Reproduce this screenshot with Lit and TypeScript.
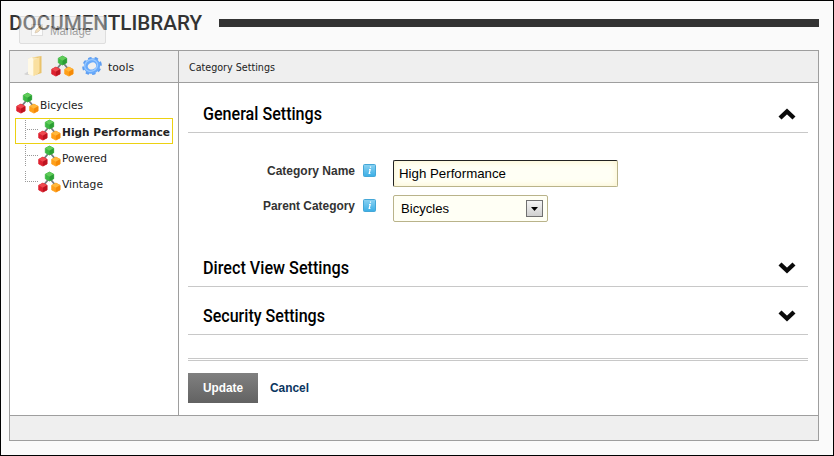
import { LitElement, html, css, svg } from "lit";
import { customElement, property } from "lit/decorators.js";

/** One line of text fitted to a set width; the baseline sits 4px above the box's foot. */
const line = (text: string, width: number, kind: string, height = 18) => html`
  <svg class="line ${kind}" width=${width} height=${height}>
    <text x="0" y=${height - 4} textLength=${width} lengthAdjust="spacingAndGlyphs">${text}</text>
  </svg>`;

const cube = (x: number, y: number, top: string, left: string, right: string) => svg`
  <g transform="translate(${x} ${y})">
    <path d="M0-4.5 4.2-2.3V2.3L0 4.5-4.2 2.3V-2.3Z" fill=${left} stroke=${left} stroke-width=".8" stroke-linejoin="round" />
    <path d="M0-4.5 4.2-2.3 0 .2-4.2-2.3Z" fill=${top} />
    <path d="M4.2-2.3 0 .2V4.5L4.2 2.3Z" fill=${right} />
  </g>`;

@customElement("category-icon")
class CategoryIcon extends LitElement {
  static styles = css`
    :host { display: block; width: 23px; height: 22px; flex: none; }
    svg { display: block; }
  `;
  render() {
    return html`<svg width="23" height="22" viewBox="0 0 23 22">
      <path d="M11.5 7 5 15M11.5 7l6.5 8" stroke="#777c7f" stroke-width="1.8" />
      ${cube(11.5, 5.5, "#62cc5a", "#3cb843", "#2a9c34")}
      ${cube(4.9, 16.6, "#ee4a50", "#dd2230", "#bd1420")}
      ${cube(17.9, 16.6, "#ffb83e", "#ffa01a", "#f58a08")}
    </svg>`;
  }
}

@customElement("settings-section")
class SettingsSection extends LitElement {
  @property() heading = "";
  @property({ type: Number }) span = 100;
  @property({ type: Boolean }) open = false;
  static styles = css`
    :host { display: flex; justify-content: space-between; align-items: flex-end; box-sizing: border-box;
      border-bottom: 1px solid #c8c8c8; padding: 0 12px 8px 15px; }
    svg { display: block; overflow: visible; }
    text { font: 500 17.5px Roboto, sans-serif; fill: #000; }
    .arrow { margin-bottom: 3px; }
  `;
  render() {
    return html`
      <svg width=${this.span} height="20"><text x="0" y="16" textLength=${this.span} lengthAdjust="spacingAndGlyphs">${this.heading}</text></svg>
      <svg class="arrow" width="18" height="13"><path d=${this.open ? "M2 10 9 3.5 16 10" : "M2 2 9 8.5 16 2"} fill="none" stroke="#0a0a0a" stroke-width="4.4" /></svg>`;
  }
}

@customElement("app-root")
class AppRoot extends LitElement {
  static styles = css`
    :host { display: block; box-sizing: border-box; width: 834px; height: 456px; border: 1px solid #000;
      background: #fafafa; padding: 0 14px 0 8px; overflow: hidden; }
    svg { display: block; flex: none; overflow: visible; }
    .title { position: relative; display: flex; height: 49px; align-items: flex-start; }
    .title .line { margin-top: 8px; }
    .brand { font: 500 21px Roboto, sans-serif; fill: #333; }
    .bar { flex: 1; height: 8px; margin: 18px 0 0 17px; background: #333; }
    .manage { position: absolute; left: 10px; top: 15px; width: 87px; height: 28px; box-sizing: border-box;
      border: 1px solid #b8b8b8; border-radius: 2px; background: #e8e8e8; opacity: .42; display: flex; padding: 6px 0 0 11px; gap: 6px; }
    .title .manage .line { margin-top: -2px; }
    .faint { font: 13px "Liberation Sans", sans-serif; fill: #222; }
    .panel { box-sizing: border-box; width: 810px; height: 391px; border: 1px solid #9e9e9e; background: #fff;
      display: grid; grid-template: 32px 332px 1fr / 169px 1fr; }
    .panel > * { box-sizing: border-box; min-width: 0; }
    .tools { display: flex; background: #efefef; border-right: 1px solid #9e9e9e; border-bottom: 1px solid #9e9e9e; padding: 4px 0 0 14px; }
    .tools category-icon { margin-left: 8px; }
    .gear { margin-left: 8px; }
    .tools .line { margin: 2px 0 0 6px; }
    .caption { background: #efefef; border-bottom: 1px solid #9e9e9e; padding: 6px 0 0 10px; }
    .ui { font: 11px "DejaVu Sans", sans-serif; fill: #222; }
    .ui.strong { font-weight: bold; }
    .tree { border-right: 1px solid #9e9e9e; padding: 9px 0 0 5px; }
    .node { display: flex; align-items: flex-start; height: 26px; box-sizing: border-box; padding-left: 1px; }
    .node .line { margin: 3px 0 0 1px; }
    .child { padding-left: 9px; border: 1px solid transparent; width: 158px; }
    .chosen { border-color: #ecd112; }
    .content { padding: 0 10px 0 9px; }
    .general { height: 50px; }
    .form { height: 106px; padding-top: 27px; box-sizing: border-box; }
    .row { display: flex; justify-content: flex-start; height: 35px; }
    .name { width: 167px; display: flex; justify-content: flex-end; padding-top: 1px; }
    .label { font: bold 12px "Liberation Sans", sans-serif; fill: #333; }
    .info { margin: 4px 17px 0 8px; }
    .field { box-sizing: border-box; height: 27px; width: 225px; border: 1px solid #b9b38a; border-radius: 2px;
      background: #fffff5; display: flex; padding: 4px 0 0 5px; }
    .input { border-top-color: #222; border-left-color: #222; box-shadow: inset 0 0 7px #fbf2c8; }
    .select { width: 155px; padding: 4px 0 0 7px; }
    .select .drop { margin: 0 0 0 auto; padding-right: 4px; }
    .value { font: 13px "Liberation Sans", sans-serif; fill: #000; }
    .direct { height: 48px; }
    .direct, .security { height: 48px; }
    .rule { height: 3px; box-sizing: border-box; border: solid #c8c8c8; border-width: 1px 0; margin-top: 23px; }
    .actions { display: flex; margin-top: 12px; }
    .update { width: 70px; height: 30px; box-sizing: border-box; padding: 5px 0 0 15px; background: linear-gradient(#808080, #626262); }
    .update .line { fill: #fff; }
    .cancel { padding: 5px 0 0 12px; }
    .cancel .line { fill: #0b3560; }
    .foot { grid-column: 1 / 3; border-top: 1px solid #9e9e9e; background: #efefef; }
  `;

  private child(text: string, width: number, last = false, chosen = false) {
    return html`<div class="node child ${chosen ? "chosen" : ""}">
      <svg width="13" height="22"><path d="M.5 ${chosen ? 1 : 0}V${last ? 11 : 21}M2 10.5H13" stroke="#999" stroke-dasharray="1 1" /></svg>
      <category-icon></category-icon>
      ${line(text, width, chosen ? "ui strong" : "ui")}
    </div>`;
  }

  private info() {
    return html`<svg class="info" width="13" height="13">
      <defs><linearGradient id="sky" x2="0" y2="1"><stop stop-color="#8bd2f2" /><stop offset="1" stop-color="#3aaee6" /></linearGradient></defs>
      <rect x=".5" y=".5" width="12" height="12" rx="1" fill="url(#sky)" stroke="#45a7d7" />
      <path d="M6.9 3.2h1.2M6 5.5h1.2L6.2 9.5h1.2" fill="none" stroke="#fff" stroke-width="1.2" />
    </svg>`;
  }

  render() {
    return html`
      <div class="title">
        ${line("DOCUMENTLIBRARY", 193, "brand", 25)}
        <div class="bar"></div>
        <div class="manage">
          <svg width="13" height="14"><rect x=".5" y="1.5" width="11" height="11" fill="#fff" stroke="#bbb" /><path d="m4 10 1-3 5-5 2 2-5 5Z" fill="#e8b868" stroke="#a08050" stroke-width=".7" /></svg>
          ${line("Manage", 41, "faint")}
        </div>
      </div>
      <div class="panel">
        <div class="tools">
          <svg width="19" height="23" viewBox="0 0 19 23">
            <path d="m0 19 5-3v4H2Z" fill="#d4d4d4" />
            <path d="M8 2.5 17.5 1v17L10 20.5Z" fill="#eac36b" />
            <path d="m4 4 4-2 6.5 1v15L10 21l-6-2Z" fill="#f7e6b8" />
            <path d="m4 4 4-2 1.5 3V21L4 19Z" fill="#fff9e6" />
            <path d="m9.5 5.5 6-3.5v15l-6 4Z" fill="#fae0a0" />
          </svg>
          <category-icon></category-icon>
          <svg class="gear" width="20" height="22" viewBox="0 0 20 22">
            <g transform="rotate(-25 10 11)" fill="none">
              <ellipse cx="10" cy="11" rx="8.7" ry="7.6" stroke="#5d9df0" stroke-width="2.6" stroke-dasharray="3.4 2.9" />
              <ellipse cx="10" cy="11" rx="6.4" ry="5.5" stroke="#68aafb" stroke-width="4.2" />
              <ellipse cx="9.4" cy="10.2" rx="6.6" ry="5.6" stroke="#9ac9ff" stroke-width="1.3" />
            </g>
          </svg>
          ${line("tools", 26, "ui")}
        </div>
        <div class="caption">${line("Category Settings", 86, "ui")}</div>
        <div class="tree">
          <div class="node"><category-icon></category-icon>${line("Bicycles", 43, "ui")}</div>
          ${this.child("High Performance", 108, false, true)}
          ${this.child("Powered", 45)}
          ${this.child("Vintage", 41, true)}
        </div>
        <div class="content">
          <settings-section class="general" heading="General Settings" span="119" open></settings-section>
          <div class="form">
            <div class="row">
              <div class="name">${line("Category Name", 88, "label")}</div>${this.info()}
              <div class="field input">${line("High Performance", 107, "value", 17)}</div>
            </div>
            <div class="row">
              <div class="name">${line("Parent Category", 92, "label")}</div>${this.info()}
              <div class="field select">${line("Bicycles", 48, "value", 17)}
                <svg class="drop" width="17" height="17">
                  <defs><linearGradient id="face" x2="0" y2="1"><stop stop-color="#f5f5f5" /><stop offset="1" stop-color="#cfcfcf" /></linearGradient></defs>
                  <rect x=".5" y=".5" width="16" height="16" fill="url(#face)" stroke="#707070" />
                  <path d="M5 7h7l-3.5 4Z" />
                </svg>
              </div>
            </div>
          </div>
          <settings-section class="direct" heading="Direct View Settings" span="146"></settings-section>
          <settings-section class="security" heading="Security Settings" span="122"></settings-section>
          <div class="rule"></div>
          <div class="actions">
            <div class="update">${line("Update", 40, "label")}</div>
            <div class="cancel">${line("Cancel", 39, "label")}</div>
          </div>
        </div>
        <div class="foot"></div>
      </div>`;
  }
}
